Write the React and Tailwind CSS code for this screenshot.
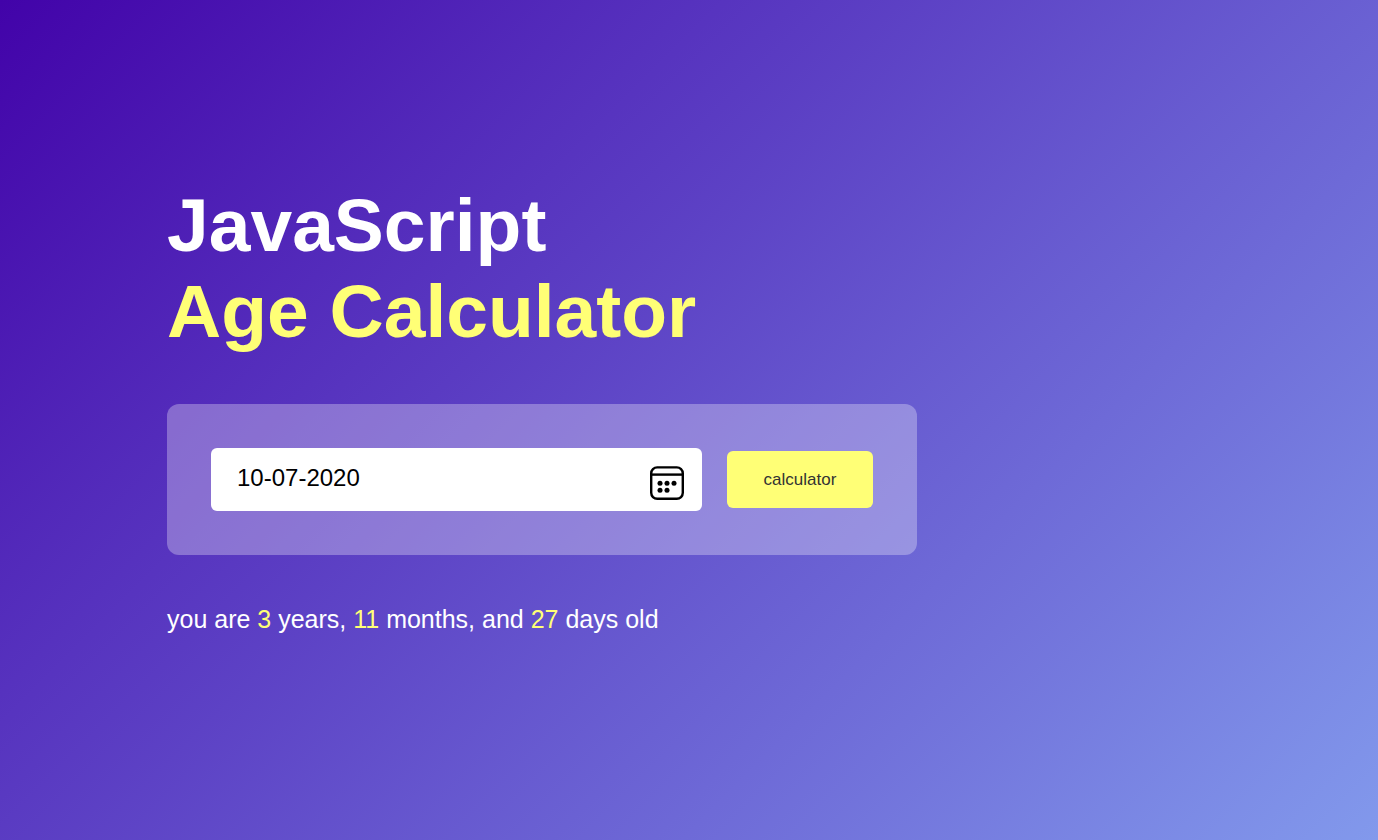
import { useRef, useState } from "react";

function CalendarIcon() {
  return (
    <svg viewBox="0 0 34 34" className="size-[34px]" fill="none" aria-hidden="true">
      <rect x="1.2" y="1.4" width="31.6" height="31.4" rx="6" stroke="black" strokeWidth="2.4" />
      <path d="M1 8.6H33" stroke="black" strokeWidth="2.4" />
      <g fill="black">
        <circle cx="10" cy="17.2" r="2.5" />
        <circle cx="17" cy="17.2" r="2.5" />
        <circle cx="24" cy="17.2" r="2.5" />
        <circle cx="10" cy="24.3" r="2.5" />
        <circle cx="17" cy="24.3" r="2.5" />
      </g>
    </svg>
  );
}

export default function App() {
  const input = useRef(null);
  const [date, setDate] = useState("10-07-2020");

  return (
    <main className="min-h-screen bg-linear-[135deg,#4203a9,#8299ec] px-[167px] pt-[182px] pb-10 font-['Liberation_Sans',Arial,sans-serif] text-white">
      <div className="w-full max-w-[750px]">
        <h1 className="text-[75px] leading-[86px] font-bold">
          JavaScript
          <br />
          <span className="text-[#ffff76]">Age Calculator</span>
        </h1>
        <form
          className="mt-[50px] flex items-center gap-[25px] rounded-xl bg-white/30 px-11 py-11"
          onSubmit={(e) => e.preventDefault()}
        >
          <div className="flex h-[63px] min-w-0 flex-1 items-center rounded-md bg-white pr-[18px] pl-[26px] text-black">
            <input
              ref={input}
              type="text"
              aria-label="Date of birth"
              value={date}
              onChange={(e) => setDate(e.target.value)}
              className="min-w-0 flex-1 bg-transparent pb-1 text-2xl outline-none"
            />
            <button type="button" aria-label="Choose date" className="pt-1.5" onClick={() => input.current.focus()}>
              <CalendarIcon />
            </button>
          </div>
          <button type="submit" className="h-[57px] w-[146px] rounded-md bg-[#ffff76] text-[17px] text-[#333333]">
            calculator
          </button>
        </form>
        <p className="mt-[50px] text-[25px] leading-[28px]">
          you are <span className="text-[#ffff76]">3</span> years, <span className="text-[#ffff76]">11</span> months, and{" "}
          <span className="text-[#ffff76]">27</span> days old
        </p>
      </div>
    </main>
  );
}
